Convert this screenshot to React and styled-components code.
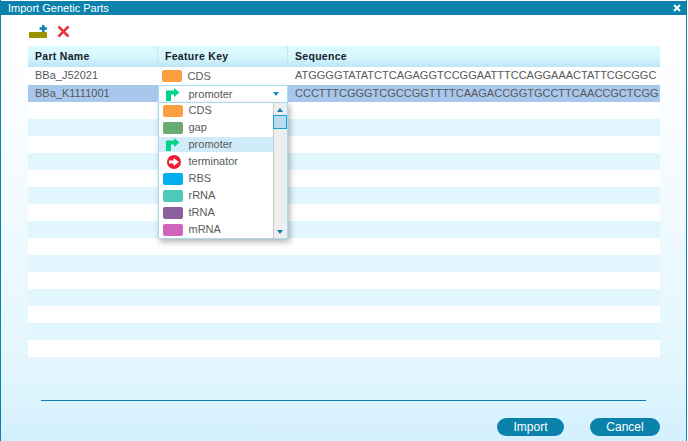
import styled, { createGlobalStyle } from "styled-components";

const GlobalStyle = createGlobalStyle`
  html, body {
    margin: 0;
    padding: 0;
    background: #ffffff;
  }
`;

const parts = [
  { name: "BBa_J52021", key: "CDS", sequence: "ATGGGGTATATCTCAGAGGTCCGGAATTTCCAGGAAACTATTCGCGGC" },
  { name: "BBa_K1111001", key: "promoter", sequence: "CCCTTTCGGGTCGCCGGTTTTCAAGACCGGTGCCTTCAACCGCTCGG", selected: true },
];

const features = [
  { label: "CDS", color: "#fb9d41" },
  { label: "gap", color: "#68ab72" },
  { label: "promoter", icon: "promoter", active: true },
  { label: "terminator", icon: "terminator" },
  { label: "RBS", color: "#03aeef" },
  { label: "rRNA", color: "#4bc9bb" },
  { label: "tRNA", color: "#8c5f9d" },
  { label: "mRNA", color: "#d064bf" },
];

const PromoterIcon = () => (
  <svg width="20" height="13" viewBox="0 0 20 13">
    <path d="M3 13V2.500h8V0l5.500 4.500L11 9V6.500H8V13z" fill="#04d38a" />
  </svg>
);

const TerminatorIcon = () => (
  <svg width="20" height="14" viewBox="0 0 20 14">
    <circle cx="11" cy="7" r="7" fill="#ed1c2e" />
    <path d="M6 5.500h4.500V3L16 7l-5.500 4V8.500H6z" fill="#ffffff" />
  </svg>
);

const FeatureIcon = ({ feature }) => {
  if (feature.icon === "promoter") return <PromoterIcon />;
  if (feature.icon === "terminator") return <TerminatorIcon />;
  return <Swatch $color={feature.color} />;
};

const App = () => (
  <>
    <GlobalStyle />
    <Window>
      <TitleBar>
        <Title>Import Genetic Parts</Title>
        <CloseIcon viewBox="0 0 8 8">
          <path d="M1 1l6 6M7 1L1 7" stroke="#ffffff" strokeWidth="2" />
        </CloseIcon>
      </TitleBar>
      <Content>
        <Toolbar>
          <ToolButton aria-label="Add">
            <svg width="18" height="13" viewBox="0 0 18 13">
              <rect x="0" y="7" width="18" height="6" fill="#9b9400" />
              <path d="M13 0h2.500v2.300H18v2.500h-2.500V7H13V4.800h-2.500V2.300H13z" fill="#0c82ac" />
            </svg>
          </ToolButton>
          <ToolButton aria-label="Remove">
            <svg width="13" height="13" viewBox="0 0 13 13">
              <path d="M1.500 1.500l10 10M11.500 1.500l-10 10" stroke="#e8343c" strokeWidth="2.600" />
            </svg>
          </ToolButton>
        </Toolbar>
        <Table>
          <HeaderRow>
            <HeaderCell>Part Name</HeaderCell>
            <HeaderCell>Feature Key</HeaderCell>
            <HeaderCell>Sequence</HeaderCell>
          </HeaderRow>
          {parts.map((part) => (
            <Row key={part.name} $selected={part.selected}>
              <Cell>{part.name}</Cell>
              {part.selected ? (
                <SelectCell>
                  <IconSlot><PromoterIcon /></IconSlot>
                  <span>{part.key}</span>
                  <SelectCaret />
                  <Menu>
                    <MenuList>
                      {features.map((feature) => (
                        <MenuItem key={feature.label} $active={feature.active}>
                          <IconSlot><FeatureIcon feature={feature} /></IconSlot>
                          <span>{feature.label}</span>
                        </MenuItem>
                      ))}
                    </MenuList>
                    <Scrollbar>
                      <ArrowUp />
                      <Thumb />
                      <ArrowDown />
                    </Scrollbar>
                  </Menu>
                </SelectCell>
              ) : (
                <KeyCell>
                  <IconSlot><Swatch $color="#fb9d41" /></IconSlot>
                  <span>{part.key}</span>
                </KeyCell>
              )}
              <Cell>{part.sequence}</Cell>
            </Row>
          ))}
          {Array.from({ length: 15 }, (_, i) => (
            <EmptyRow key={i} $striped={i % 2 === 1} />
          ))}
        </Table>
        <Divider />
        <Footer>
          <Button>Import</Button>
          <Button $wide>Cancel</Button>
        </Footer>
      </Content>
    </Window>
  </>
);

const Window = styled.div`
  box-sizing: border-box;
  width: 687px;
  height: 441px;
  padding-top: 1px;
  border-left: 1px solid #0a82ac;
  border-right: 1px solid #0a82ac;
  background: linear-gradient(#ffffff 0%, #ffffff 10%, #edf9ff 57%, #e2f6fe 84%, #d3f0fd 100%);
  font-family: "Liberation Sans", Arial, sans-serif;
  font-size: 11px;
  color: #58595b;
  overflow: hidden;
`;
const TitleBar = styled.div`
  height: 14px;
  background: #0a82ac;
  display: flex;
  align-items: center;
  justify-content: space-between;
  padding: 0 5px 0 7px;
  color: #ffffff;
`;
const Title = styled.div`
  font-size: 11px;
  line-height: 14px;
`;
const CloseIcon = styled.svg`
  width: 8px;
  height: 8px;
`;
const Content = styled.div`
  padding: 0 26px 0 27px;
`;
const Toolbar = styled.div`
  height: 31px;
  display: flex;
  align-items: flex-start;
  gap: 10px;
  padding: 10px 0 0 1px;
  box-sizing: border-box;
`;
const ToolButton = styled.div`
  display: flex;
  height: 14px;
`;
const Table = styled.div`
  width: 632px;
`;
const columns = "130px 130px 372px";
const HeaderRow = styled.div`
  display: grid;
  grid-template-columns: ${columns};
  height: 21px;
  background: linear-gradient(#dcfcff, #d8f7fd 50%, #bce6f6);
`;
const HeaderCell = styled.div`
  font-weight: bold;
  font-size: 10.500px;
  letter-spacing: 0.3px;
  line-height: 21px;
  padding-left: 7px;
  color: #16212a;
  border-right: 1px solid #c0e8f6;
  &:last-child {
    border-right: none;
  }
`;
const Row = styled.div`
  display: grid;
  grid-template-columns: ${columns};
  height: ${({ $selected }) => ($selected ? "17px" : "18px")};
  line-height: ${({ $selected }) => ($selected ? "16px" : "17px")};
  background: ${({ $selected }) => ($selected ? "#a9c6ec" : "#ffffff")};
`;
const Cell = styled.div`
  padding-left: 7px;
  white-space: nowrap;
  overflow: hidden;
`;
const KeyCell = styled.div`
  display: flex;
  align-items: center;
  padding-left: 4px;
`;
const SelectCell = styled.div`
  position: relative;
  box-sizing: border-box;
  display: flex;
  align-items: center;
  padding-left: 4px;
  background: #ffffff;
  border: 1px solid #a5e2f6;
`;
const IconSlot = styled.span`
  display: flex;
  align-items: center;
  width: 25.500px;
  flex: none;
`;
const Swatch = styled.span`
  display: block;
  width: 20px;
  height: 12px;
  border-radius: 2px;
  background: ${({ $color }) => $color};
`;
const SelectCaret = styled.span`
  position: absolute;
  right: 8px;
  top: 6px;
  border-left: 3px solid transparent;
  border-right: 3px solid transparent;
  border-top: 4px solid #0a8fc4;
`;
const Menu = styled.div`
  position: absolute;
  left: -1px;
  top: 16px;
  width: 130px;
  height: 137px;
  box-sizing: border-box;
  display: flex;
  background: #ffffff;
  border: 1px solid #a5dcf0;
  box-shadow: 2px 3px 6px rgba(0, 0, 0, 0.3);
  z-index: 2;
`;
const MenuList = styled.div`
  flex: 1;
  display: flex;
  flex-direction: column;
`;
const MenuItem = styled.div`
  display: flex;
  align-items: center;
  height: 15px;
  margin-bottom: 2px;
  padding-left: 4px;
  line-height: 15px;
  background: ${({ $active }) => ($active ? "#cfecf8" : "transparent")};
`;
const Scrollbar = styled.div`
  position: relative;
  box-sizing: border-box;
  width: 14px;
  flex: none;
  background: #eeeeee;
  border-left: 1px solid #c8c8c8;
`;
const ArrowUp = styled.span`
  position: absolute;
  left: 3px;
  top: 5px;
  border-left: 3px solid transparent;
  border-right: 3px solid transparent;
  border-bottom: 4px solid #0a82ac;
`;
const ArrowDown = styled.span`
  position: absolute;
  left: 3px;
  bottom: 4px;
  border-left: 3px solid transparent;
  border-right: 3px solid transparent;
  border-top: 4px solid #0a82ac;
`;
const Thumb = styled.span`
  position: absolute;
  left: -1px;
  top: 12px;
  width: 14px;
  height: 14px;
  box-sizing: border-box;
  background: #b9dcef;
  border: 1px solid #1c9ccf;
`;
const EmptyRow = styled.div`
  height: 17px;
  background: ${({ $striped }) => ($striped ? "#e2f6fe" : "#ffffff")};
`;
const Divider = styled.div`
  height: 1px;
  width: 605px;
  margin: 43px 0 0 13px;
  background: #0a82ac;
`;
const Footer = styled.div`
  width: 632px;
  display: flex;
  justify-content: flex-end;
  gap: 26px;
  padding-top: 17px;
`;
const Button = styled.div`
  width: ${({ $wide }) => ($wide ? "70px" : "67px")};
  height: 18px;
  border-radius: 9px;
  background: #0a82ac;
  color: #ffffff;
  text-align: center;
  font-size: 12px;
  line-height: 18px;
`;

export default App;
